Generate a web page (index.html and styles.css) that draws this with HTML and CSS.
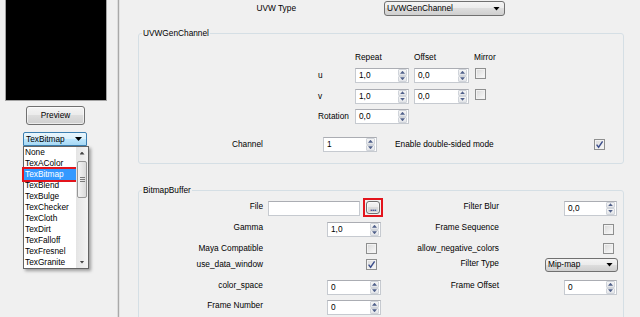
FILE: index.html
```html
<!DOCTYPE html>
<html lang="en">
<head>
  <meta charset="UTF-8" />
  <title>TexBitmap</title>
  <link rel="stylesheet" href="styles.css">
</head>
<body>
  <div class="app">
    <div class="side">
      <div class="preview-box"></div>
      <button class="btn preview-btn">Preview</button>
      <div class="combo combo-hot side-combo"><span>TexBitmap</span><i class="arrow"></i></div>
      <div class="popup">
        <ul class="popup-items">
          <li>None</li>
          <li>TexAColor</li>
          <li class="sel">TexBitmap</li>
          <li>TexBlend</li>
          <li>TexBulge</li>
          <li>TexChecker</li>
          <li>TexCloth</li>
          <li>TexDirt</li>
          <li>TexFalloff</li>
          <li>TexFresnel</li>
          <li>TexGranite</li>
        </ul>
        <div class="vscroll">
          <div class="sb-arrow sb-up"></div>
          <div class="sb-thumb"><i class="grip"></i></div>
          <div class="sb-space"></div>
          <div class="sb-arrow sb-down"></div>
        </div>
      </div>
    </div>

    <div class="splitter"></div>

    <div class="main">
      <div class="uvw-row">
        <span class="uvw-label">UVW Type</span>
        <div class="combo uvw-combo"><span>UVWGenChannel</span><i class="arrow"></i></div>
      </div>

      <div class="group group-uvw">
        <div class="group-title">UVWGenChannel</div>
        <div class="uv-grid">
          <span></span>
          <span class="col-head">Repeat</span>
          <span class="col-head">Offset</span>
          <span class="col-head">Mirror</span>

          <span class="row-label">u</span>
          <div class="spin w54"><span class="spin-value">1,0</span><span class="spin-btns"><i class="spin-up"></i><i class="spin-down"></i></span></div>
          <div class="spin w55"><span class="spin-value">0,0</span><span class="spin-btns"><i class="spin-up"></i><i class="spin-down"></i></span></div>
          <span class="check mirror"></span>

          <span class="row-label">v</span>
          <div class="spin w54"><span class="spin-value">1,0</span><span class="spin-btns"><i class="spin-up"></i><i class="spin-down"></i></span></div>
          <div class="spin w55"><span class="spin-value">0,0</span><span class="spin-btns"><i class="spin-up"></i><i class="spin-down"></i></span></div>
          <span class="check mirror"></span>

          <span class="row-label">Rotation</span>
          <div class="spin w54"><span class="spin-value">0,0</span><span class="spin-btns"><i class="spin-up"></i><i class="spin-down"></i></span></div>
        </div>

        <div class="channel-row">
          <span>Channel</span>
          <div class="spin w54"><span class="spin-value">1</span><span class="spin-btns"><i class="spin-up"></i><i class="spin-down"></i></span></div>
          <span>Enable double-sided mode</span>
          <span class="check checked"><svg viewBox="0 0 9 9"><polyline points="1.6,4.6 3.6,7.2 7.6,1.4" /></svg></span>
        </div>
      </div>

      <div class="group group-bitmap">
        <div class="group-title">BitmapBuffer</div>
        <div class="bb-grid">
          <span class="lbl">File</span>
          <div class="file-field">
            <span class="textbox"></span>
            <span class="marked"><button class="btn dots-btn">...</button></span>
          </div>
          <span class="lbl">Filter Blur</span>
          <div class="spin w53 right"><span class="spin-value">0,0</span><span class="spin-btns"><i class="spin-up"></i><i class="spin-down"></i></span></div>

          <span class="lbl">Gamma</span>
          <div class="spin w54"><span class="spin-value">1,0</span><span class="spin-btns"><i class="spin-up"></i><i class="spin-down"></i></span></div>
          <span class="lbl">Frame Sequence</span>
          <span class="check"></span>

          <span class="lbl flat">Maya Compatible</span>
          <span class="check"></span>
          <span class="lbl flat">allow_negative_colors</span>
          <span class="check"></span>

          <span class="lbl flat">use_data_window</span>
          <span class="check checked"><svg viewBox="0 0 9 9"><polyline points="1.6,4.6 3.6,7.2 7.6,1.4" /></svg></span>
          <span class="lbl half">Filter Type</span>
          <div class="combo filter-combo"><span>Mip-map</span><i class="arrow"></i></div>

          <span class="lbl">color_space</span>
          <div class="spin w54"><span class="spin-value">0</span><span class="spin-btns"><i class="spin-up"></i><i class="spin-down"></i></span></div>
          <span class="lbl">Frame Offset</span>
          <div class="spin w53 right"><span class="spin-value">0</span><span class="spin-btns"><i class="spin-up"></i><i class="spin-down"></i></span></div>

          <span class="lbl">Frame Number</span>
          <div class="spin w54"><span class="spin-value">0</span><span class="spin-btns"><i class="spin-up"></i><i class="spin-down"></i></span></div>
        </div>
      </div>
    </div>
  </div>
</body>
</html>
```

FILE: styles.css
```css
* {
  box-sizing: border-box;
}

body {
  margin: 0;
  background: #f0f0f0;
  font-family: "Liberation Sans", Arial, sans-serif;
  font-size: 8.3px;
  line-height: 11px;
  color: #000;
  overflow: hidden;
}

.app {
  display: flex;
  width: 640px;
  height: 317px;
}

/* left column: preview + texture type list */
.side {
  width: 117px;
  display: flex;
  flex-direction: column;
  align-items: flex-start;
}

.preview-box {
  margin-left: 5px;
  width: 102px;
  height: 101px;
  background: #000;
  border: 1px solid #a3a3a3;
  border-top: 0;
}

.btn {
  padding: 0;
  font: inherit;
  color: #000;
  border: 1px solid #707070;
  border-radius: 3px;
  background: linear-gradient(#f4f4f4 0, #ebebeb 50%, #dddddd 50%, #cfcfcf 100%);
  box-shadow: inset 0 0 0 1px rgba(255, 255, 255, 0.6);
}

.preview-btn {
  margin: 5px 0 0 26px;
  width: 59px;
  height: 19px;
}

.combo {
  display: flex;
  align-items: center;
  height: 15px;
  padding-left: 2px;
  border: 1px solid #707070;
  border-radius: 3px;
  background: linear-gradient(#f4f4f4 0, #ebebeb 50%, #dddddd 50%, #cfcfcf 100%);
  white-space: nowrap;
}

.combo-hot {
  border-color: #3c7fb1;
  background: linear-gradient(#eaf6fd 0, #d9f0fc 50%, #bee6fd 50%, #a7d9f5 100%);
}

.arrow {
  margin-left: auto;
  margin-right: 4px;
  width: 7px;
  height: 4px;
  background: #000;
  clip-path: polygon(0 0, 100% 0, 50% 100%);
}

.side-combo {
  margin: 7px 0 0 23px;
  width: 64px;
  height: 14px;
  border-radius: 2px 2px 0 0;
}

.popup {
  margin-left: 23px;
  width: 66px;
  height: 123px;
  display: flex;
  background: #fff;
  border: 1px solid #646464;
  box-shadow: 2px 2px 3px rgba(0, 0, 0, 0.35);
}

.popup-items {
  list-style: none;
  margin: 0;
  padding: 0;
  flex: 1;
}

.popup-items li {
  height: 11px;
  padding-left: 1px;
  white-space: nowrap;
}

.popup-items li.sel {
  background: #3399ff;
  color: #fff;
  outline: 2px solid #e3141c;
}

.vscroll {
  width: 12px;
  display: flex;
  flex-direction: column;
  background: linear-gradient(to right, #e4e4e4, #f4f4f4);
}

.sb-arrow {
  height: 12px;
  display: flex;
  align-items: center;
  justify-content: center;
}

.sb-arrow::after {
  content: "";
  width: 5px;
  height: 3px;
  background: #444;
}

.sb-up::after {
  clip-path: polygon(50% 0, 100% 100%, 0 100%);
}

.sb-down::after {
  clip-path: polygon(0 0, 100% 0, 50% 100%);
}

.sb-thumb {
  margin: 2px 1px 0;
  height: 37px;
  display: flex;
  align-items: center;
  justify-content: center;
  border: 1px solid #979797;
  border-radius: 2px;
  background: linear-gradient(to right, #f4f4f4, #dadada);
}

.grip {
  width: 5px;
  height: 5px;
  background: repeating-linear-gradient(#7a7a7a 0 1px, transparent 1px 2px);
}

.sb-space {
  flex: 1;
}

.splitter {
  width: 3px;
  background: linear-gradient(to right, #dcdcdc 0 1px, #a9a9a9 1px 2px, #e2e2e2 2px);
}

/* right column */
.main {
  flex: 1;
}

.uvw-row {
  display: flex;
  align-items: center;
  height: 17px;
}

.uvw-label {
  width: 176px;
  text-align: right;
}

.uvw-combo {
  margin-left: 88px;
  width: 121px;
}

.group {
  margin-left: 18px;
  width: 486px;
  border: 1px solid #d5dfe5;
  border-radius: 3px;
}

.group-uvw {
  margin-top: 16px;
  padding-bottom: 11px;
}

.group-bitmap {
  margin-top: 26px;
  padding-bottom: 10px;
}

.group-title {
  width: fit-content;
  margin: -6px 0 0 3px;
  padding: 0 1px;
  background: #f0f0f0;
}

.uv-grid {
  display: grid;
  grid-template-columns: 32px 54px 55px auto;
  grid-template-rows: 16px 15px 15px 15px;
  column-gap: 5px;
  row-gap: 5.5px;
  margin: 7.5px 0 0 179px;
}

.col-head {
  align-self: end;
}

.row-label {
  align-self: center;
  white-space: nowrap;
}

.channel-row {
  display: grid;
  grid-template-columns: 91px 72px 199px auto;
  align-items: center;
  height: 15px;
  margin: 13px 0 0 93px;
}

.bb-grid {
  display: grid;
  grid-template-columns: 124px 118px 118px 119px;
  grid-template-rows: 16px 27px 11px 21px 25px 15px;
  align-items: center;
  margin-top: 4px;
}

.lbl {
  text-align: right;
  white-space: nowrap;
  margin-bottom: 4px;
}

.lbl.flat {
  margin-bottom: 0;
}

.lbl.half {
  margin-bottom: 2px;
}

.file-field {
  display: flex;
  align-items: center;
  padding-left: 5px;
}

.textbox {
  flex: none;
  width: 92px;
  height: 15px;
  background: #fff;
  border: 1px solid #c6cad0;
  border-top-color: #abadb3;
}

/* red annotation frame round the browse button */
.marked {
  flex: none;
  display: flex;
  margin: 0 0 2px 3px;
  padding: 1px;
  border: 2px solid #e3141c;
}

.dots-btn {
  width: 14px;
  height: 13px;
  font-size: 9px;
  font-weight: bold;
  line-height: 12px;
  letter-spacing: -0.5px;
  color: #33408a;
}

/* spin boxes */
.spin {
  display: flex;
  height: 15px;
  background: #fff;
  border: 1px solid #c6cad0;
  border-top-color: #abadb3;
  justify-self: start;
}

.bb-grid .spin {
  justify-self: end;
}

.spin.right {
  margin-right: 1px;
}

.w53 { width: 53px; }
.w54 { width: 54px; }
.w55 { width: 55px; }

.spin-value {
  flex: 1;
  padding-left: 3px;
  line-height: 13px;
}

.spin-btns {
  width: 10px;
  display: flex;
  flex-direction: column;
  padding: 0 1px 0 0;
}

.spin-up,
.spin-down {
  flex: 1;
  display: flex;
  align-items: center;
  justify-content: center;
  border: 1px solid #d0d4da;
  border-radius: 1px;
  background: linear-gradient(#f6f6f6, #e2e4e8);
}

.spin-up::after,
.spin-down::after {
  content: "";
  width: 5px;
  height: 3px;
  background: #50608a;
}

.spin-up::after {
  clip-path: polygon(50% 0, 100% 100%, 0 100%);
}

.spin-down::after {
  clip-path: polygon(0 0, 100% 0, 50% 100%);
}

/* check boxes */
.check {
  width: 11px;
  height: 11px;
  border: 1px solid #8e8f8f;
  background: linear-gradient(135deg, #d8d8d8, #fbfbfb);
  box-shadow: inset 0 0 0 1px #f2f2f2;
  display: flex;
  align-items: center;
  justify-content: center;
}

.bb-grid .check {
  justify-self: end;
  margin-right: 4px;
}

.check.mirror {
  margin-left: 1px;
}

.check svg {
  width: 9px;
  height: 9px;
}

.check polyline {
  fill: none;
  stroke: #3b4d8a;
  stroke-width: 1.4;
}

.filter-combo {
  justify-self: end;
  width: 73px;
  height: 14px;
}
```
